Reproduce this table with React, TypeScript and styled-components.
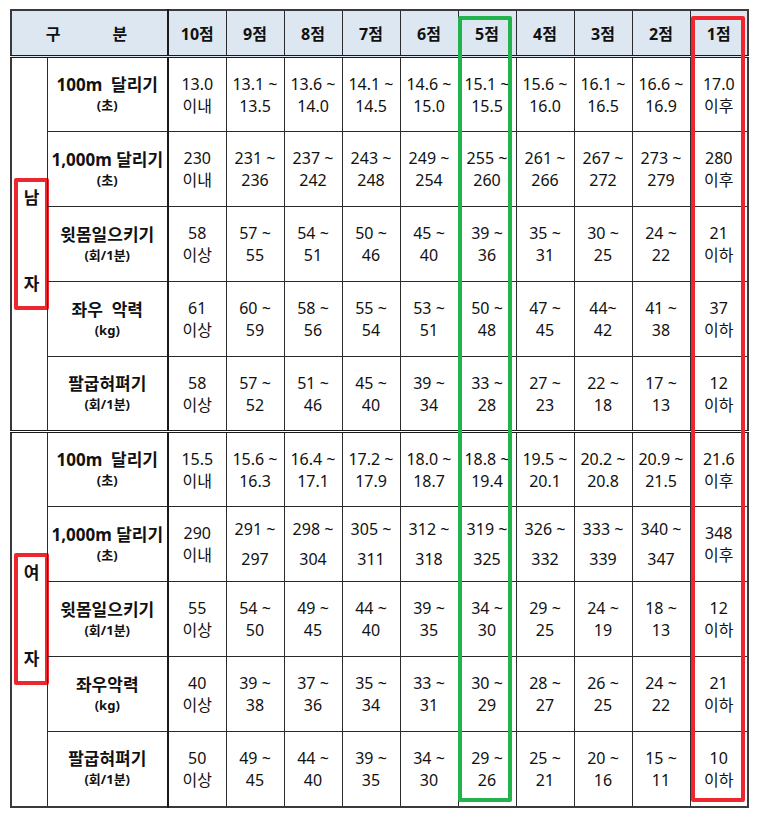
import styled, { createGlobalStyle } from 'styled-components';

const GlobalStyle = createGlobalStyle`
  html, body {
    margin: 0;
    padding: 0;
    background: #ffffff;
  }
  body {
    font-family: "Noto Sans", "Noto Sans CJK KR", sans-serif;
    color: #111111;
  }
`;

// #region Styles

const Frame = styled.div`
  position: relative;
  width: 760px;
  height: 817px;
  padding: 9px 0 0 10px;
  box-sizing: border-box;
`;

const Table = styled.table`
  border-collapse: collapse;
  table-layout: fixed;
  width: 737px;
  border: 2px solid #3a3a3a;
`;

const HeadCell = styled.th<{ $thickRight?: boolean }>`
  height: 44px;
  padding: 0;
  background-color: #dde7f2;
  border: 1px solid #2b2b2b;
  border-bottom: 3px double #1a1a1a;
  border-right: ${({ $thickRight }) =>
    $thickRight ? '2px solid #1a1a1a' : '1px solid #2b2b2b'};
  font-size: 16px;
  font-weight: 700;
  text-align: center;
`;

const Division = styled.div`
  display: flex;
  justify-content: center;
  gap: 52px;
  padding-right: 6px;
`;

const Row = styled.tr<{ $groupStart?: boolean }>`
  height: 75px;

  & > td {
    border-top: ${({ $groupStart }) =>
      $groupStart ? '3px double #1a1a1a' : '1px solid #2b2b2b'};
  }
`;

const GenderCell = styled.td`
  padding: 0;
  border: 1px solid #2b2b2b;
  vertical-align: middle;
`;

const GenderMark = styled.div`
  width: 35px;
  height: 132px;
  margin-left: 2px;
  box-sizing: border-box;
  border: 4px solid #ee2630;
  border-radius: 2px;
  display: flex;
  flex-direction: column;
  align-items: center;
  justify-content: space-between;
  padding: 4px 0 10px;
  font-size: 17px;
  font-weight: 600;
  line-height: 24px;
`;

const LabelCell = styled.td`
  padding: 0;
  border: 1px solid #2b2b2b;
  border-right: 2px solid #1a1a1a;
  text-align: center;
  vertical-align: middle;
`;

const LabelTitle = styled.div`
  font-size: 17px;
  font-weight: 700;
  line-height: 22px;
  white-space: pre;
`;

const LabelUnit = styled.div`
  font-size: 13px;
  font-weight: 700;
  line-height: 19px;
`;

const ValueCell = styled.td<{ $loose?: boolean }>`
  padding: 0;
  border: 1px solid #2b2b2b;
  text-align: center;
  vertical-align: middle;
  font-size: 16px;
  line-height: ${({ $loose }) => ($loose ? '30px' : '22px')};
  white-space: nowrap;
`;

const ColumnMark = styled.div<{ $left: number; $color: string }>`
  position: absolute;
  top: 16px;
  left: ${({ $left }) => $left}px;
  width: 54px;
  height: 786px;
  box-sizing: border-box;
  border: 4px solid ${({ $color }) => $color};
  border-radius: 2px;
  pointer-events: none;
`;

// #endregion

type Item = {
  title: string;
  unit: string;
  values: string[];
  loose?: boolean;
};

const scores = ['10점', '9점', '8점', '7점', '6점', '5점', '4점', '3점', '2점', '1점'];

const male: Item[] = [
  {
    title: '100m  달리기',
    unit: '(초)',
    values: ['13.0/이내', '13.1 ~/13.5', '13.6 ~/14.0', '14.1 ~/14.5', '14.6 ~/15.0', '15.1 ~/15.5', '15.6 ~/16.0', '16.1 ~/16.5', '16.6 ~/16.9', '17.0/이후'],
  },
  {
    title: '1,000m 달리기',
    unit: '(초)',
    values: ['230/이내', '231 ~/236', '237 ~/242', '243 ~/248', '249 ~/254', '255 ~/260', '261 ~/266', '267 ~/272', '273 ~/279', '280/이후'],
  },
  {
    title: '윗몸일으키기',
    unit: '(회/1분)',
    values: ['58/이상', '57 ~/55', '54 ~/51', '50 ~/46', '45 ~/40', '39 ~/36', '35 ~/31', '30 ~/25', '24 ~/22', '21/이하'],
  },
  {
    title: '좌우  악력',
    unit: '(kg)',
    values: ['61/이상', '60 ~/59', '58 ~/56', '55 ~/54', '53 ~/51', '50 ~/48', '47 ~/45', '44~/42', '41 ~/38', '37/이하'],
  },
  {
    title: '팔굽혀펴기',
    unit: '(회/1분)',
    values: ['58/이상', '57 ~/52', '51 ~/46', '45 ~/40', '39 ~/34', '33 ~/28', '27 ~/23', '22 ~/18', '17 ~/13', '12/이하'],
  },
];

const female: Item[] = [
  {
    title: '100m  달리기',
    unit: '(초)',
    values: ['15.5/이내', '15.6 ~/16.3', '16.4 ~/17.1', '17.2 ~/17.9', '18.0 ~/18.7', '18.8 ~/19.4', '19.5 ~/20.1', '20.2 ~/20.8', '20.9 ~/21.5', '21.6/이후'],
  },
  {
    title: '1,000m 달리기',
    unit: '(초)',
    values: ['290/이내', '291 ~/297', '298 ~/304', '305 ~/311', '312 ~/318', '319 ~/325', '326 ~/332', '333 ~/339', '340 ~/347', '348/이후'],
    loose: true,
  },
  {
    title: '윗몸일으키기',
    unit: '(회/1분)',
    values: ['55/이상', '54 ~/50', '49 ~/45', '44 ~/40', '39 ~/35', '34 ~/30', '29 ~/25', '24 ~/19', '18 ~/13', '12/이하'],
  },
  {
    title: '좌우악력',
    unit: '(kg)',
    values: ['40/이상', '39 ~/38', '37 ~/36', '35 ~/34', '33 ~/31', '30 ~/29', '28 ~/27', '26 ~/25', '24 ~/22', '21/이하'],
  },
  {
    title: '팔굽혀펴기',
    unit: '(회/1분)',
    values: ['50/이상', '49 ~/45', '44 ~/40', '39 ~/35', '34 ~/30', '29 ~/26', '25 ~/21', '20 ~/16', '15 ~/11', '10/이하'],
  },
];

const Group = ({ gender, items }: { gender: [string, string]; items: Item[] }) => (
  <>
    {items.map((item, i) => (
      <Row key={item.title + i} $groupStart={i === 0 && gender[0] === '여'}>
        {i === 0 && (
          <GenderCell rowSpan={items.length}>
            <GenderMark>
              <span>{gender[0]}</span>
              <span>{gender[1]}</span>
            </GenderMark>
          </GenderCell>
        )}
        <LabelCell>
          <LabelTitle>{item.title}</LabelTitle>
          <LabelUnit>{item.unit}</LabelUnit>
        </LabelCell>
        {item.values.map((v, j) => {
          const [top, bottom] = v.split('/');
          const ranged = top.includes('~');
          return (
            <ValueCell key={j} $loose={item.loose && ranged}>
              {top}
              <br />
              {bottom}
            </ValueCell>
          );
        })}
      </Row>
    ))}
  </>
);

const App = () => {
  return (
    <>
      <GlobalStyle />
      <Frame>
        <Table>
          <colgroup>
            <col style={{ width: 36 }} />
            <col style={{ width: 121 }} />
            {scores.map((s) => (
              <col key={s} style={{ width: 58 }} />
            ))}
          </colgroup>
          <thead>
            <tr>
              <HeadCell colSpan={2} $thickRight>
                <Division>
                  <span>구</span>
                  <span>분</span>
                </Division>
              </HeadCell>
              {scores.map((s) => (
                <HeadCell key={s}>{s}</HeadCell>
              ))}
            </tr>
          </thead>
          <tbody>
            <Group gender={['남', '자']} items={male} />
            <Group gender={['여', '자']} items={female} />
          </tbody>
        </Table>
        <ColumnMark $left={458} $color="#22b34c" />
        <ColumnMark $left={691} $color="#ee2630" />
      </Frame>
    </>
  );
};

export default App;
